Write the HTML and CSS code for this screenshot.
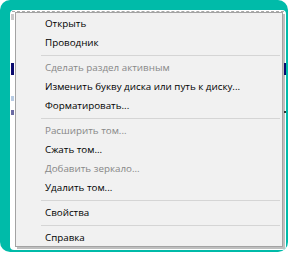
FILE: index.html
```html
<!DOCTYPE html>
<html lang="ru">

<head>
  <meta charset="UTF-8">
  <title>Контекстное меню тома</title>
  <link rel="stylesheet" href="styles.css">
</head>

<body>
  <div class="frame">
    <div class="shot">
      <div class="dash"></div>
      <div class="row">
        <!-- bits of the window behind the menu -->
        <div class="edge edge-left">
          <span class="bit bit-grey"></span>
          <span class="bit bit-navy"></span>
          <span class="bit bit-light"></span>
          <span class="bit bit-violet"></span>
        </div>

        <ul class="menu">
          <li class="item">Открыть</li>
          <li class="item">Проводник</li>
          <li class="sep"></li>
          <li class="item disabled">Сделать раздел активным</li>
          <li class="item">Изменить букву диска или путь к диску...</li>
          <li class="item">Форматировать...</li>
          <li class="sep"></li>
          <li class="item disabled">Расширить том...</li>
          <li class="item">Сжать том...</li>
          <li class="item disabled">Добавить зеркало...</li>
          <li class="item">Удалить том...</li>
          <li class="sep"></li>
          <li class="item">Свойства</li>
          <li class="sep"></li>
          <li class="item">Справка</li>
        </ul>

        <div class="edge edge-right">
          <span class="bit bit-navy"></span>
          <span class="bit bit-dark"></span>
        </div>
      </div>
    </div>
  </div>
</body>

</html>
```

FILE: styles.css
```css
body {
  margin: 0;
  background: #fff;
  font-family: 'Open Sans', 'Noto Sans', sans-serif;
}

.frame {
  width: 288px;
  height: 252px;
  box-sizing: border-box;
  padding: 10px 2px 2px 10px;
  background: #00bba9;
  border-radius: 10px;
}

.shot {
  display: flex;
  flex-direction: column;
  width: 276px;
  height: 240px;
  background: #fff;
  border-radius: 4px;
}

.dash {
  margin: 1px 2px 0 2px;
  border-top: 1px dashed #a9a9a9;
}

.row {
  display: flex;
  flex: 1;
}

.edge {
  display: flex;
  flex-direction: column;
}

.edge-left {
  width: 5px;
}

.edge-right {
  width: 3px;
}

.bit {
  display: block;
}

.edge-left .bit {
  margin-left: 1px;
  width: 3px;
}

.edge-right .bit {
  margin-left: 1px;
  width: 2px;
}

.edge-left .bit-grey {
  margin-top: 2px;
  height: 6px;
  background: #c9c9c9;
}

.edge-left .bit-navy {
  margin-top: 43px;
  height: 12px;
  background: #0a0a6e;
}

.edge-left .bit-light {
  margin-top: 21px;
  height: 5px;
  background: #b8cce4;
}

.edge-left .bit-violet {
  margin-top: 9px;
  height: 5px;
  background: #6b6ba3;
}

.edge-right .bit-navy {
  margin-top: 51px;
  height: 12px;
  background: #0a0a6e;
}

.edge-right .bit-dark {
  margin-top: 36px;
  height: 2px;
  background: #333;
}

.menu {
  list-style: none;
  margin: 0;
  padding: 1px 0 0 0;
  width: 268px;
  height: 235px;
  box-sizing: border-box;
  background: #f1f1f1;
  border: 1px solid #a3a3a3;
  box-shadow: 2px 2px 0 rgba(0, 0, 0, 0.25);
}

.item {
  height: 19px;
  line-height: 19px;
  padding-left: 29px;
  font-size: 9.8px;
  color: #000;
  white-space: nowrap;
}

.item.disabled {
  color: #878787;
}

.sep {
  height: 6px;
  margin: 0 2px 0 25px;
  display: flex;
  align-items: center;
}

.sep::before {
  content: "";
  flex: 1;
  border-top: 1px solid #d5d5d5;
}
```
